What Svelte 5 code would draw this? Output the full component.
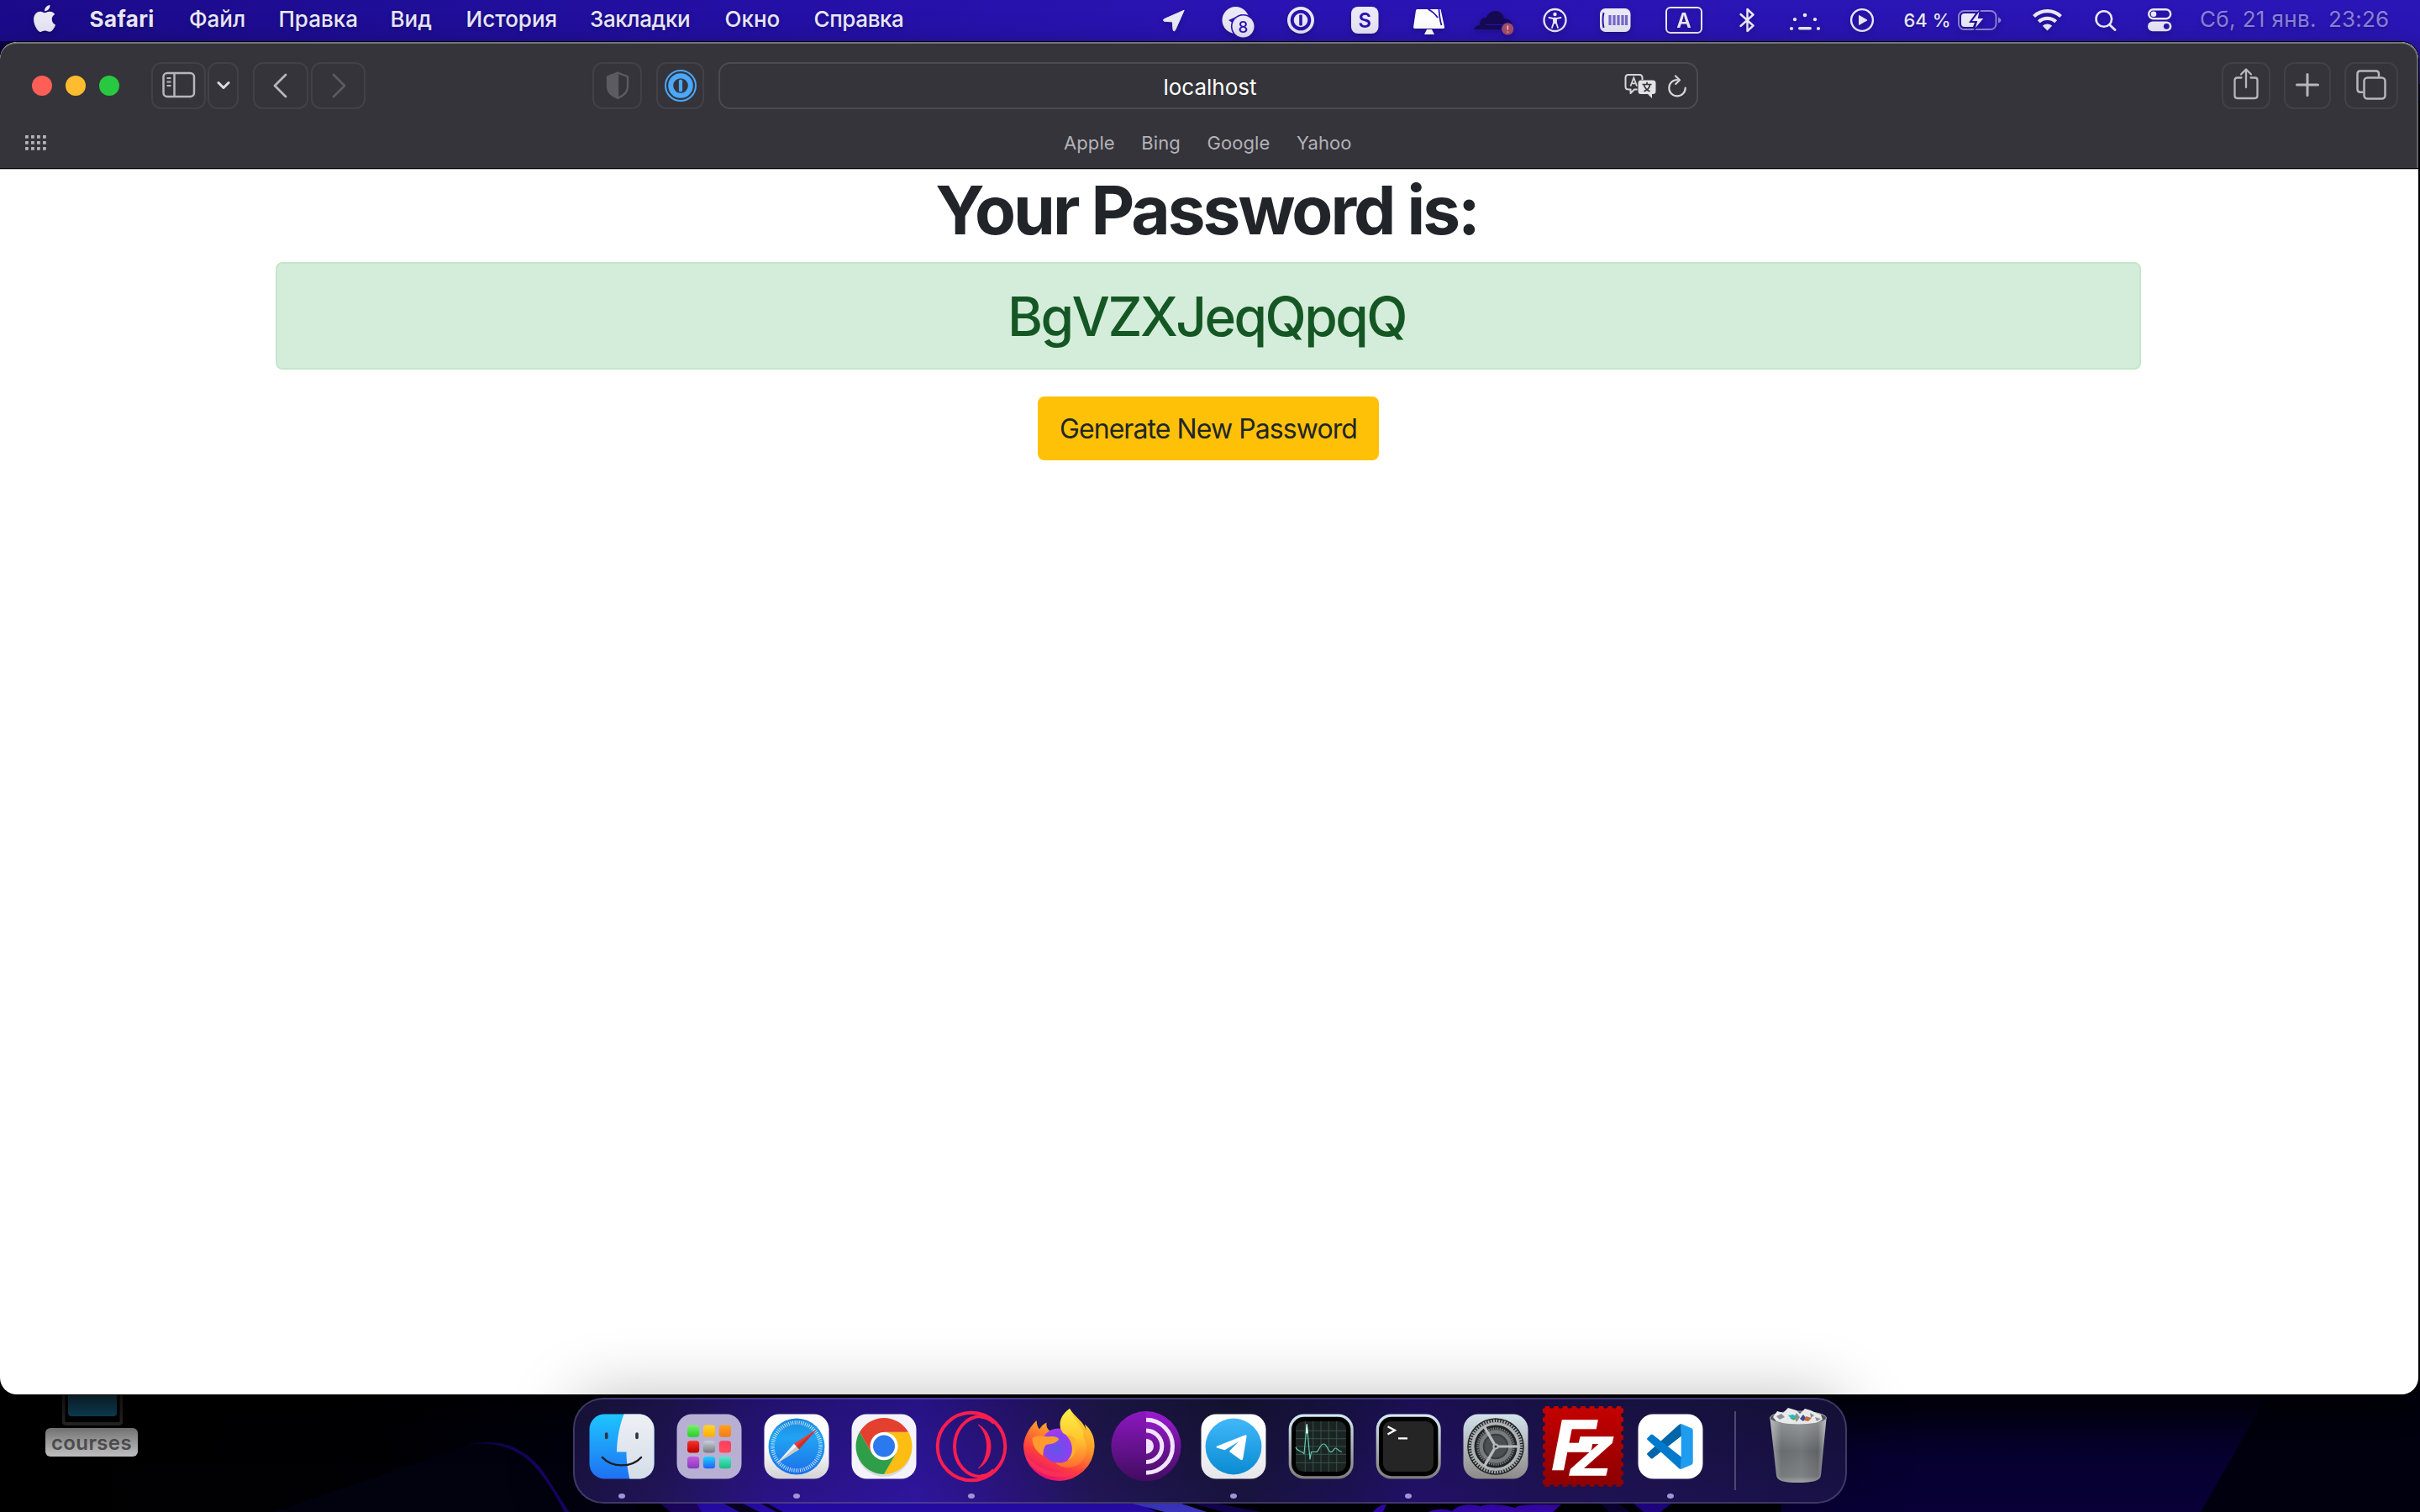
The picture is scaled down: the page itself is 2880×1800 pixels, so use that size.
<script>
  const bookmarks = ['Apple', 'Bing', 'Google', 'Yahoo'];

  const launchpad = [
    ['#7df06a', '#22cf2c'], ['#ffd32e', '#ffad00'], ['#ffa31a', '#f5791f'],
    ['#f5342a', '#c00000'], ['#c9d0d8', '#75797c'], ['#ff3b5f', '#ff4d5c'],
    ['#c35ae0', '#8739bd'], ['#1fd0ff', '#1f62f0'], ['#5be3d3', '#12bf7b']
  ].map(([from, to], i) => ({ from, to, x: 26 + (i % 3) * 18.9, y: 26.5 + Math.floor(i / 3) * 18.8 }));

  const bites = Array.from({ length: 10 }, (_, i) => 4 + i * 10.67);
  const gridDots = Array.from({ length: 12 }, (_, i) => ({ x: (i % 4) * 7, y: Math.floor(i / 4) * 7 }));
</script>

<div class="desktop">
  <svg class="wallpaper" viewBox="0 0 2880 1800" width="2880" height="1800" aria-hidden="true">
    <defs>
      <linearGradient id="wp-left" x1="0" x2="1" y1="0" y2="0">
        <stop offset="0" stop-color="#000" /><stop offset=".6" stop-color="#010004" /><stop offset="1" stop-color="#020112" />
      </linearGradient>
      <linearGradient id="wp-right" x1="0" x2="0" y1="0" y2="1">
        <stop offset="0" stop-color="#020010" /><stop offset=".6" stop-color="#070030" /><stop offset="1" stop-color="#080036" />
      </linearGradient>
      <linearGradient id="wp-arc" gradientUnits="userSpaceOnUse" x1="556" y1="0" x2="676" y2="0">
        <stop offset="0" stop-color="#070220" /><stop offset=".35" stop-color="#150458" /><stop offset="1" stop-color="#190468" />
      </linearGradient>
    </defs>
    <rect width="2880" height="1800" fill="#010008" />
    <rect y="40" width="2880" height="80" fill="#0b0545" />
    <rect x="1440" y="40" width="1440" height="60" fill="#2a16a8" />
    <rect y="1640" width="760" height="160" fill="url(#wp-left)" />
    <path d="M325 1800L556 1720C594 1710 625 1722 647 1753C660 1773 668 1786 674 1800Z" fill="#02010e" />
    <path d="M556 1720C592 1711 625 1722 647 1753C660 1773 668 1786 677 1800L672 1800C664 1785 656 1770 644 1755C624 1727 594 1714 556 1720Z" fill="url(#wp-arc)" stroke="url(#wp-arc)" stroke-width=".5" />
    <rect x="2120" y="1640" width="600" height="160" fill="url(#wp-right)" />
    <path d="M2702 1655L2880 1655V1800H2619Z" fill="#01000f" />
    <path d="M780 1785H832L838 1800H798Z" fill="#1e0566" />
    <path d="M828 1788H1352L1376 1800H835Z" fill="#2b0cb6" />
    <path d="M858 1788H880L904 1800H880Z M902 1788H910L932 1800H924Z" fill="#0b0226" />
    <path d="M1340 1788H1400L1436 1800H1386Z" fill="#403ad2" />
    <path d="M1420 1790H1450L1500 1800H1456Z" fill="#130455" />
    <path d="M1634 1800C1640 1792 1646 1791 1650 1791L1646 1800Z" fill="#3606b4" />
    <path d="M1700 1800C1708 1796 1720 1796 1728 1799C1736 1790 1752 1790 1762 1793C1775 1789 1790 1792 1803 1795C1812 1789 1840 1792 1858 1791L1848 1800Z" fill="#3a06b8" />
    <path d="M1944 1790H1989L1976 1800H1956Z" fill="#22058c" />
    <path d="M1905 1790H1926L1940 1800H1915Z" fill="#0c0235" />
  </svg>

  <div class="folder">
    <svg width="72" height="70" viewBox="0 0 72 70" aria-hidden="true">
      <defs>
        <linearGradient id="screen" x1="0" x2="0" y1="0" y2="1"><stop offset=".5" stop-color="#1a4a5e" /><stop offset="1" stop-color="#12587a" /></linearGradient>
      </defs>
      <rect x="1.500" y="-10" width="69" height="76" rx="3" fill="#000" stroke="#2d2d2d" stroke-width="4" />
      <rect x="7" y="-10" width="58" height="67" rx="4" fill="url(#screen)" />
    </svg>
    <span class="folder-name">courses</span>
  </div>

  <header class="menubar">
    <svg width="34" height="48" viewBox="0 0 34 48">
      <path transform="translate(-2.9 6) scale(1.33)" d="M12.152 6.896c-.948 0-2.415-1.078-3.96-1.04-2.04.027-3.91 1.183-4.961 3.014-2.117 3.675-.546 9.103 1.519 12.09 1.013 1.454 2.208 3.09 3.792 3.039 1.52-.065 2.09-.987 3.935-.987 1.831 0 2.35.987 3.96.948 1.637-.026 2.676-1.48 3.676-2.948 1.156-1.688 1.636-3.325 1.662-3.415-.039-.013-3.182-1.221-3.22-4.857-.026-3.04 2.48-4.494 2.597-4.559-1.429-2.09-3.623-2.324-4.39-2.376-2-.156-3.675 1.09-4.61 1.09zM15.53 3.83c.843-1.012 1.4-2.427 1.245-3.83-1.207.052-2.662.805-3.532 1.818-.78.896-1.454 2.338-1.273 3.714 1.338.104 2.715-.688 3.559-1.701" fill="#ebe8f8" />
    </svg>
    <b>Safari</b>
    <span>Файл</span>
    <span>Правка</span>
    <span>Вид</span>
    <span>История</span>
    <span class="tight">Закладки</span>
    <span>Окно</span>
    <span class="tight">Справка</span>

    <svg width="30" height="48" viewBox="0 0 30 48"><path d="M25.2 12.2L1.6 22.6C-.2 23.6 .4 25.2 2 25.3L11.3 26L12 35.4C12.2 37.2 13.9 37.4 14.7 35.8Z" fill="#ebe8f8" stroke="#ebe8f8" stroke-linejoin="round" /></svg>
    <svg width="44" height="48" viewBox="0 0 44 48">
      <circle cx="16.500" cy="24" r="16" fill="#ebe8f8" />
      <path d="M8 24L24 17L20 34L14 28Z" fill="#2914ae" />
      <circle cx="25.500" cy="31.500" r="14.600" fill="#2914ae" />
      <circle cx="25.500" cy="31.500" r="13" fill="#ebe8f8" />
      <text x="25.500" y="38.600" text-anchor="middle" font-size="19" font-weight="500" fill="#2914ae">8</text>
    </svg>
    <svg width="34" height="48" viewBox="0 0 34 48">
      <circle cx="16" cy="24" r="16" fill="#ebe8f8" /><circle cx="16" cy="24" r="10.300" fill="none" stroke="#2914ae" stroke-width="4" />
      <rect x="14.200" y="17.500" width="3.600" height="13" rx="1" fill="#2914ae" />
    </svg>
    <svg width="34" height="48" viewBox="0 0 34 48"><rect y="8" width="32.500" height="32" rx="8" fill="#ebe8f8" /><text x="16.200" y="32.600" text-anchor="middle" font-size="24" font-weight="600" fill="#2914ae">S</text></svg>
    <svg width="40" height="48" viewBox="0 0 40 48">
      <path d="M4.500 11H32.500L37 32Q37.200 34 35.500 34H1.500Q-.200 34 .100 32L3 12.500Q3.200 11 4.500 11Z M16 35H22L25 41H13Z" fill="#fff" />
      <path d="M17.500 11Q24 14 29 21M30.500 11Q31 22 33.500 30" fill="none" stroke="#2914ae" stroke-width="1.800" />
    </svg>
    <svg width="50" height="48" viewBox="0 0 50 48">
      <path d="M0 35Q2 30 7 30Q7 20 15 21Q18 13 25.500 13Q34 13 36 22Q46 22 47 35Z" fill="#160a55" />
      <path d="M14 29.500H34" stroke="#2914ae" />
      <circle cx="40.300" cy="34.500" r="8" fill="#2914ae" /><circle cx="40.300" cy="34.500" r="7" fill="#a84f66" />
      <path d="M40.300 30.500V35.500M40.300 37.500V38.800" stroke="#e6b9cc" stroke-width="1.800" />
    </svg>
    <svg width="32" height="48" viewBox="0 0 32 48" fill="none" stroke="#ebe8f8" stroke-linecap="round">
      <circle cx="14.500" cy="24" r="13" stroke-width="2.300" />
      <circle cx="14.500" cy="17" r="2.200" fill="#ebe8f8" stroke="none" />
      <path d="M7.500 21L12.500 22H16.500L21.500 21" stroke-width="1.800" /><path d="M13 22V27L11 33M16 22V27L18 33" stroke-width="1.800" /><path d="M14.500 22V27" stroke-width="3" />
    </svg>
    <svg width="38" height="48" viewBox="0 0 38 48">
      <rect y="10" width="36.500" height="28" rx="6.500" fill="#ebe8f8" />
      <path d="M4.500 15Q2.500 24 4.500 33" fill="none" stroke="#2914ae" stroke-width="2" />
      <path d="M12 18V30M17 18V30M22 18V30M27 18V30M31.500 18V30" stroke="#7469c8" stroke-width="3.200" />
    </svg>
    <svg width="46" height="48" viewBox="0 0 46 48"><rect x="1" y="9" width="42" height="30" rx="5" fill="none" stroke="#ebe8f8" stroke-width="2" /><text x="22" y="32.500" text-anchor="middle" font-size="24" font-weight="600" fill="#ebe8f8">A</text></svg>
    <svg width="20" height="48" viewBox="0 0 20 48"><path d="M1.500 17L16.500 30.500L9.500 37V11L16.500 17.500L1.500 31" fill="none" stroke="#ebe8f8" stroke-width="2.400" stroke-linejoin="round" stroke-linecap="round" /></svg>
    <svg width="38" height="48" viewBox="0 0 38 48" fill="#ebe8f8"><circle cx="18" cy="18" r="2.300" /><circle cx="6" cy="23.200" r="2.100" /><circle cx="30" cy="23.200" r="2.100" /><circle cx="2" cy="34" r="2.100" /><circle cx="34" cy="34" r="2.100" /><rect x="10" y="32" width="16" height="3.600" rx="1.800" /></svg>
    <svg width="30" height="48" viewBox="0 0 30 48"><circle cx="14" cy="24" r="12.900" fill="none" stroke="#ebe8f8" stroke-width="2.400" /><path d="M10.500 18.500L20 24L10.500 29.500Z" fill="#ebe8f8" stroke="#ebe8f8" stroke-linejoin="round" /></svg>
    <span class="percent">64 %</span>
    <svg width="54" height="48" viewBox="0 0 54 48">
      <rect x="1" y="13" width="44.500" height="22" rx="6.500" fill="none" stroke="#8a80d6" stroke-width="2" />
      <path d="M48 20.500Q51.500 22 51.500 24T48 27.500Z" fill="#8a80d6" />
      <path d="M8 16H21L13 27H20L18 32H8Q4 32 4 28V20Q4 16 8 16Z" fill="#ebe8f8" />
      <path d="M26.500 11.500L16 25.500H22.500L19.500 36L31.500 21.500H24.500Z" fill="#ebe8f8" stroke="#2914ae" stroke-width="1.200" />
    </svg>
    <svg width="36" height="48" viewBox="0 0 36 48" fill="none" stroke="#ebe8f8" stroke-width="4.200">
      <path d="M1.500 19.500A23.500 23.500 0 0 1 33.500 19.500M7.300 25.800A15 15 0 0 1 27.700 25.800" />
      <path d="M17.500 36.500L11.800 30.700A8.500 8.500 0 0 1 23.200 30.700Z" fill="#ebe8f8" stroke="none" />
    </svg>
    <svg width="28" height="48" viewBox="0 0 28 48" fill="none" stroke="#ebe8f8" stroke-width="2.600" stroke-linecap="round"><circle cx="10.800" cy="22.500" r="9.300" /><path d="M17.600 29.500L24 35.500" stroke-width="3" /></svg>
    <svg width="30" height="48" viewBox="0 0 30 48">
      <rect x="1.200" y="11.200" width="26" height="11" rx="5.500" fill="none" stroke="#ebe8f8" stroke-width="2.400" /><circle cx="7" cy="16.700" r="3.300" fill="#ebe8f8" />
      <rect y="25.500" width="28.400" height="11.700" rx="5.800" fill="#ebe8f8" /><circle cx="22.300" cy="31.300" r="3.400" fill="#2914ae" />
    </svg>
    <span class="date">Сб, 21 янв.</span>
    <span class="time">23:26</span>
  </header>

  <section class="window">
    <div class="toolbar">
      <div class="controls">
        <div class="lights"><i class="close"></i><i class="minimize"></i><i class="zoom"></i></div>
        <button class="tool sidebar" aria-label="Sidebar">
          <svg width="40" height="34" viewBox="0 0 40 34" fill="none" stroke="#b7b6bb" stroke-width="2.500"><rect x="1.500" y="2" width="36.500" height="28" rx="4.500" /><path d="M14.500 2V30" /><path d="M5.500 8H10.500M5.500 12.500H10.500M5.500 17H10.500" stroke-width="1.800" /></svg>
        </button>
        <button class="tool chevron" aria-label="Tab groups">
          <svg width="16" height="12" viewBox="0 0 16 12"><path d="M2 2.500L8 8.500L14 2.500" fill="none" stroke="#dcdce0" stroke-width="3" stroke-linecap="round" stroke-linejoin="round" /></svg>
        </button>
        <button class="tool back" aria-label="Back">
          <svg width="20" height="30" viewBox="0 0 20 30"><path d="M16 2L3 15L16 28" fill="none" stroke="#b7b6bb" stroke-width="2.800" stroke-linecap="round" stroke-linejoin="round" /></svg>
        </button>
        <button class="tool forward" aria-label="Forward">
          <svg width="20" height="30" viewBox="0 0 20 30"><path d="M4 2L17 15L4 28" fill="none" stroke="#5b5a60" stroke-width="2.800" stroke-linecap="round" stroke-linejoin="round" /></svg>
        </button>
        <button class="tool shield" aria-label="Privacy report">
          <svg width="30" height="36" viewBox="0 0 30 36"><path d="M15 2.500L26.500 7Q27 7.300 27 8V19Q27 28 15 33Z" fill="none" stroke="#5c5b61" stroke-width="2.400" stroke-linejoin="round" /><path d="M15 1.500L3 6Q1.800 6.500 1.800 8V19Q2 29 15 34Z" fill="#5c5b61" /></svg>
        </button>
        <button class="tool onepassword" aria-label="1Password">
          <svg width="40" height="40" viewBox="0 0 40 40"><circle cx="20" cy="20" r="18" fill="none" stroke="#4aa8ff" stroke-width="2" /><circle cx="20" cy="20" r="11.800" fill="none" stroke="#4aa8ff" stroke-width="6" /><rect x="17.900" y="12.800" width="4.200" height="14.400" rx="1.500" fill="#4aa8ff" /></svg>
        </button>
        <div class="url">
          <span class="host">localhost</span>
          <div class="url-icons">
            <svg width="40" height="32" viewBox="0 0 40 32">
              <path d="M5 2H18Q21.500 2 21.500 5.500V8M15.500 19.500H12L7.500 24V19.500H5Q1.500 19.500 1.500 16V5.500Q1.500 2 5 2" fill="none" stroke="#d6d6d8" stroke-width="2" stroke-linejoin="round" />
              <path d="M7.500 15.500L11.300 5.500L15 15.500M8.700 12.300H14" fill="none" stroke="#d6d6d8" stroke-width="1.800" />
              <path d="M20 8.500H34Q37.500 8.500 37.500 12V21.500Q37.500 25 34 25H33V30L28 25H20Q16.500 25 16.500 21.500V12Q16.500 8.500 20 8.500Z" fill="#e3e3e5" />
              <path d="M21.500 13.500H32.500M27 10.800V13.500M23.500 21.800Q30 19 30.500 13.800M30.500 21.800Q24.500 19 23.500 13.800" fill="none" stroke="#35343a" stroke-width="1.700" />
            </svg>
            <svg width="24" height="30" viewBox="0 0 24 30" fill="none" stroke="#d6d6d8" stroke-width="2.200" stroke-linecap="round" stroke-linejoin="round"><path d="M12 7A9.700 9.700 0 1 0 21.700 16.700" /><path d="M10 2.500L15 7.300L10.200 12" /></svg>
          </div>
        </div>
        <button class="tool share" aria-label="Share">
          <svg width="32" height="40" viewBox="0 0 32 40" fill="none" stroke="#b7b6bb" stroke-width="2.300" stroke-linecap="round" stroke-linejoin="round"><path d="M10.500 12.500H5.500Q2.500 12.500 2.500 15.500V33.500Q2.500 37 5.500 37H26.500Q29.500 37 29.500 33.500V15.500Q29.500 12.500 26.500 12.500H21.500" /><path d="M16 24V3M10 8.500L16 2.500L22 8.500" /></svg>
        </button>
        <button class="tool plus" aria-label="New tab">
          <svg width="28" height="28" viewBox="0 0 28 28"><path d="M14 1.500V26.500M1.500 14H26.500" stroke="#b7b6bb" stroke-width="3" stroke-linecap="round" /></svg>
        </button>
        <button class="tool tabs" aria-label="Tab overview">
          <svg width="36" height="36" viewBox="0 0 36 36" fill="none" stroke="#b7b6bb" stroke-width="2.500"><path d="M8.500 26.700H5Q1.500 26.700 1.500 23V5Q1.500 1.500 5 1.500H23.500Q27 1.500 27 5V8.500" /><rect x="9.500" y="9.500" width="25" height="25" rx="4" /></svg>
        </button>
      </div>
      <div class="favorites">
        <svg width="26" height="20" viewBox="0 0 26 20" fill="#b5b4b9">{#each gridDots as d}<rect x={d.x} y={d.y} width="3.800" height="3.800" rx=".5" />{/each}</svg>
        <nav>{#each bookmarks as name}<a href="#top">{name}</a>{/each}</nav>
      </div>
    </div>

    <div class="page">
      <h1>Your Password is:</h1>
      <div class="alert"><h2>BgVZXJeqQpqQ</h2></div>
      <button class="generate">Generate New Password</button>
    </div>
  </section>

  <footer class="dock">
    <!-- Finder -->
    <div class="slot running">
      <svg viewBox="0 0 104 104">
        <defs>
          <linearGradient id="fi-b" x1="0" x2="0" y1="0" y2="1"><stop offset=".1" stop-color="#1dc9ff" /><stop offset=".9" stop-color="#1f6df2" /></linearGradient>
          <linearGradient id="fi-w" x1="0" x2="0" y1="0" y2="1"><stop offset="0" stop-color="#f3f3f6" /><stop offset="1" stop-color="#d3dde8" /></linearGradient>
          <clipPath id="squircle"><rect x="13.500" y="13.500" width="77" height="77" rx="18" /></clipPath>
        </defs>
        <g clip-path="url(#squircle)">
          <rect width="104" height="104" fill="url(#fi-b)" />
          <path d="M56 10C50 24 46.500 40 46 58.500H57.500C57.500 70 59 80 62 94H104V0Z" fill="url(#fi-w)" />
        </g>
        <path d="M33.700 37V41.500M70 37V41.500" stroke="#2d3340" stroke-width="3.600" stroke-linecap="round" />
        <path d="M29 65C40 77.500 64 77.500 75 65" fill="none" stroke="#1c1c22" stroke-width="2.400" stroke-linecap="round" />
      </svg>
    </div>
    <!-- Launchpad -->
    <div class="slot">
      <svg viewBox="0 0 104 104">
        <defs>{#each launchpad as t, i}<linearGradient id="lp{i}" x1="0" x2="0" y1="0" y2="1"><stop offset="0" stop-color={t.from} /><stop offset="1" stop-color={t.to} /></linearGradient>{/each}</defs>
        <rect x="13.500" y="13.500" width="77" height="77" rx="18" fill="#b8b0d3" />
        {#each launchpad as t, i}<rect x={t.x} y={t.y} width="14.200" height="14.200" rx="3.500" fill="url(#lp{i})" />{/each}
      </svg>
    </div>
    <!-- Safari -->
    <div class="slot running">
      <svg viewBox="0 0 104 104">
        <defs>
          <linearGradient id="sf-b" x1="0" x2="0" y1="0" y2="1"><stop offset=".5" stop-color="#fff" /><stop offset="1" stop-color="#d2d2d4" /></linearGradient>
          <linearGradient id="sf-d" x1="0" x2="0" y1="0" y2="1"><stop offset="0" stop-color="#1c8ade" /><stop offset=".35" stop-color="#21a3f3" /><stop offset="1" stop-color="#1c6fe8" /></linearGradient>
        </defs>
        <rect x="13.500" y="13.500" width="77" height="77" rx="18" fill="url(#sf-b)" />
        <circle cx="52" cy="52" r="33.500" fill="url(#sf-d)" />
        <circle cx="52" cy="52" r="28.500" fill="none" stroke="#d5ecff" stroke-width="4.500" stroke-dasharray=".9 1.587" />
        <path d="M76 31.500L54.800 55.500L49 48.800Z" fill="#ea3c34" />
        <path d="M28.500 72L49 48.800L54.800 55.500Z" fill="#f1f1f3" />
        <path d="M76 31.500L54.800 55.500L51.900 52Z" fill="#c92f2b" /><path d="M28.500 72L51.900 52L54.800 55.500Z" fill="#c9c9ce" />
      </svg>
    </div>
    <!-- Chrome -->
    <div class="slot">
      <svg viewBox="0 0 104 104">
        <rect x="13.500" y="13.500" width="77" height="77" rx="18" fill="#f4f2fa" />
        <ellipse cx="52" cy="55" rx="33" ry="33" fill="#000" opacity=".1" />
        <g transform="translate(52 51.600)">
          <path d="M0 -16.750L29 -16.750A33.500 33.500 0 0 1 0 33.500L14.500 8.375Z" fill="#fdbd12" />
          <path d="M14.500 8.375L0 33.500A33.500 33.500 0 0 1 -29 -16.750L-14.500 8.375Z" fill="#2f9e49" />
          <path d="M-14.500 8.375L-29 -16.750A33.500 33.500 0 0 1 29 -16.750H0Z" fill="#e4402f" />
          <circle r="16.600" fill="#fff" /><circle r="13" fill="#2a79ee" />
        </g>
      </svg>
    </div>
    <!-- Opera GX -->
    <div class="slot running">
      <svg viewBox="0 0 104 104" fill="none" stroke="#fa1e4e">
        <circle cx="52" cy="52" r="40.300" stroke-width="4" />
        <path d="M64 16C46 16 32 32 32 52S46 88 64 88" stroke-width="4" />
        <path d="M63 16.500Q72 16.500 79 24M63 87.500Q72 87.500 79 80" stroke-width="4.500" />
        <path d="M60 26C80 36 80 68 60 78C74 66 74 38 60 26Z" fill="#fa1e4e" stroke-width="1" />
      </svg>
    </div>
    <!-- Firefox -->
    <div class="slot">
      <svg viewBox="0 0 104 104">
        <defs>
          <linearGradient id="ff-o" x1=".75" x2=".25" y1="0" y2="1"><stop offset="0" stop-color="#ffe23a" /><stop offset=".38" stop-color="#ff9a28" /><stop offset=".7" stop-color="#ff3f3c" /><stop offset="1" stop-color="#e2087f" /></linearGradient>
          <radialGradient id="ff-p" cx=".45" cy=".6" r=".65"><stop offset="0" stop-color="#6156e8" /><stop offset=".6" stop-color="#8a40f0" /><stop offset="1" stop-color="#b637e0" /></radialGradient>
          <linearGradient id="ff-y" x1="0" x2="0" y1="0" y2="1"><stop offset="0" stop-color="#fff04a" /><stop offset=".5" stop-color="#ffc72e" /><stop offset="1" stop-color="#ff6a30" /></linearGradient>
        </defs>
        <path d="M65 7C72 18 82 22 85 34L83 25.500C92 33 95 43 94.500 53A42.300 42 0 0 1 10 53C10 42 15 32 25.500 21C26 26 27 29 29 31.500C31 28 34 25 37.500 23.500C37 28 38 31 41 33L54 34C53 22 58 13 65 7Z" fill="url(#ff-o)" />
        <circle cx="51.500" cy="51" r="20.500" fill="url(#ff-p)" />
        <path d="M65 7C54 14 50 26 57 36C64 40 70 45 70 55C69 68 60 74 48 71C58 82 79 78 84 62C87 52 84 46 81 40C84 30 69 20 65 7Z" fill="url(#ff-y)" />
        <path d="M61 39C66 38 70 40 72 44C74 56 70 66 62 69C70 62 70 47 61 39Z" fill="#ffb02c" />
        <path d="M20.500 42C27 37 36 41 43 40C48 40 52 41 52 44C49 48 43 49 37 50C33 54 34 60 33 63C25 58 20 50 20.500 42Z" fill="#ff9b2e" />
        <path d="M12 62C20 88 60 98 86 76C70 88 34 88 12 62Z" fill="#ff3552" opacity=".7" />
      </svg>
    </div>
    <!-- Tor Browser -->
    <div class="slot">
      <svg viewBox="0 0 104 104">
        <defs><linearGradient id="tor" x1="0" x2="0" y1="0" y2="1"><stop offset="0" stop-color="#9a1bd0" /><stop offset="1" stop-color="#430d60" /></linearGradient></defs>
        <circle cx="52" cy="51.700" r="41.600" fill="url(#tor)" />
        <path d="M52 10.500A41.200 41.200 0 0 0 52 93Z" fill="#3a0a66" opacity=".14" />
        <g fill="none" stroke="#f2e4ff" stroke-width="5"><path d="M52 20.200A31.500 31.500 0 0 1 52 83.200" /><path d="M52 32.900A18.800 18.800 0 0 1 52 70.500" /></g>
        <path d="M52 42.700A9 9 0 0 1 52 60.700Z" fill="#f2e4ff" />
      </svg>
    </div>
    <!-- Telegram -->
    <div class="slot running">
      <svg viewBox="0 0 104 104">
        <defs>
          <linearGradient id="tg" x1="0" x2="0" y1="0" y2="1"><stop offset="0" stop-color="#41b8fa" /><stop offset="1" stop-color="#0a8bd2" /></linearGradient>
          <linearGradient id="tile" x1="0" x2="0" y1="0" y2="1"><stop offset=".2" stop-color="#fff" /><stop offset="1" stop-color="#e6e6ea" /></linearGradient>
        </defs>
        <rect x="13.500" y="13.500" width="77" height="77" rx="18" fill="url(#tile)" />
        <circle cx="52" cy="52" r="33.400" fill="url(#tg)" />
        <path d="M32.500 51.500L65.500 38.400Q68 37.600 67.500 40.500L63.200 66.500Q62.600 69 60.400 67.700L47.500 58.500Q46.800 57.500 48 56.500L58 46.300L41.500 56.300L32 53.500Q30.500 52.500 32.500 51.500Z" fill="#fff" />
      </svg>
    </div>
    <!-- Activity Monitor -->
    <div class="slot">
      <svg viewBox="0 0 104 104">
        <defs><linearGradient id="frame" x1="0" x2="0" y1="0" y2="1"><stop offset="0" stop-color="#d4ebf5" /><stop offset="1" stop-color="#807b7a" /></linearGradient></defs>
        <rect x="13.700" y="13.500" width="77" height="77" rx="18" fill="url(#frame)" />
        <rect x="17" y="16.800" width="70.400" height="70.400" rx="15" fill="#000" />
        <rect x="22" y="22" width="60" height="60" rx="9" fill="#1c2422" />
        <path d="M33.300 22V82M42.700 22V82M52 22V82M61.300 22V82M70.700 22V82M22 33.300H82M22 42.700H82M22 52H82M22 61.300H82M22 71.300H82" stroke="#36584f" stroke-width=".9" />
        <path d="M22 53C24 58 28 57 32 60.500L35.300 25.500L39 67.500L40.500 58.500L47 58.500C51 55 51 49 55.300 49S60 58 63.500 58.500S67 54 69.500 54S73 58.500 77 58.500" fill="none" stroke="#62c9b4" stroke-width="1.200" />
        <path d="M34.300 36L35.300 25.500L36.300 36Z" fill="#d7fff5" stroke="#d7fff5" />
      </svg>
    </div>
    <!-- Terminal -->
    <div class="slot running">
      <svg viewBox="0 0 104 104">
        <rect x="13.700" y="13.500" width="77" height="77" rx="18" fill="url(#frame)" />
        <rect x="17" y="16.800" width="70.400" height="70.400" rx="15" fill="#000" />
        <rect x="22" y="22" width="60" height="60" rx="9" fill="#252525" />
        <path d="M27.500 28.200L36 32.800L27.500 37.500M40 42.300H51" fill="none" stroke="#fff" stroke-width="2.300" />
      </svg>
    </div>
    <!-- System Preferences -->
    <div class="slot">
      <svg viewBox="0 0 104 104" fill="none">
        <defs><linearGradient id="set" x1="0" x2="0" y1="0" y2="1"><stop offset="0" stop-color="#d3e3ec" /><stop offset="1" stop-color="#8e8a88" /></linearGradient></defs>
        <rect x="13.500" y="13.500" width="77" height="77" rx="18" fill="url(#set)" />
        <circle cx="52" cy="52" r="33.800" fill="#222425" />
        <circle cx="52" cy="52" r="30.600" stroke="#a7acaf" stroke-width="3.400" stroke-dasharray="1.800 1.404" />
        <circle cx="52" cy="52" r="27.300" stroke="#b0b4b6" stroke-width="3.600" />
        <circle cx="52" cy="52" r="21.500" fill="#3a3d3f" stroke="#797d7f" stroke-width="2.500" stroke-dasharray="1.400 1.300" />
        <circle cx="52" cy="52" r="17.500" stroke="#777b7d" stroke-width="4.500" />
        <circle cx="52" cy="52" r="13" fill="#4c4f51" />
        <path d="M52 52H79M52 52L38.500 28.600M52 52L38.500 75.400" stroke="#b9bdbf" stroke-width="3.200" />
        <circle cx="52" cy="52" r="3.600" fill="#b4b8ba" /><circle cx="52" cy="52" r="1.500" fill="#333" />
      </svg>
    </div>
    <!-- FileZilla -->
    <div class="slot">
      <svg viewBox="0 0 104 104">
        <defs>
          <linearGradient id="fz" x1="0" x2="0" y1="0" y2="1"><stop offset="0" stop-color="#c60000" /><stop offset="1" stop-color="#8a0000" /></linearGradient>
          <mask id="stamp"><rect width="104" height="104" fill="#fff" />{#each bites as b}<circle cx={b} cy="4" r="2.800" /><circle cx={b} cy="100" r="2.800" /><circle cx="4" cy={b} r="2.800" /><circle cx="100" cy={b} r="2.800" />{/each}</mask>
        </defs>
        <rect x="4" y="4" width="96" height="96" fill="url(#fz)" mask="url(#stamp)" />
        <text class="fz" x="14.500" y="80" font-size="86">F<tspan x="38" y="86" font-size="65" textLength="47" lengthAdjust="spacingAndGlyphs">Z</tspan></text>
      </svg>
    </div>
    <!-- Visual Studio Code -->
    <div class="slot running">
      <svg viewBox="0 0 104 104">
        <rect x="13.500" y="13.500" width="77" height="77" rx="18" fill="#fff" />
        <path d="M64.700 25Q62.500 25 60.500 27.500L24.500 60Q23.500 61 24.500 62L28.500 66Q29.700 67 31 66L65 39.500Z" fill="#0065a9" />
        <path d="M64.700 79Q62.500 79 60.500 76.500L24.500 44Q23.500 43 24.500 42L28.500 38Q29.700 37 31 38L65 64.500Z" fill="#007acc" />
        <path d="M64.700 25L77 30.300Q78.700 31 78.700 33V71Q78.700 73 77 73.700L64.700 79Z" fill="#1f9cf0" />
      </svg>
    </div>
    <div class="divider"></div>
    <!-- Trash -->
    <div class="slot">
      <svg viewBox="0 0 104 104">
        <defs>
          <linearGradient id="tr" x1="0" x2="1" y1="0" y2="0"><stop offset="0" stop-color="#a0a3a6" /><stop offset=".2" stop-color="#686c6f" /><stop offset=".55" stop-color="#717577" /><stop offset=".85" stop-color="#606366" /><stop offset="1" stop-color="#a5a8aa" /></linearGradient>
          <linearGradient id="tr2" x1="0" x2="0" y1="0" y2="1"><stop offset="0" stop-color="#fff" stop-opacity=".28" /><stop offset=".5" stop-color="#fff" stop-opacity="0" /><stop offset=".9" stop-color="#fff" stop-opacity=".1" /><stop offset="1" stop-color="#fff" stop-opacity=".35" /></linearGradient>
        </defs>
        <ellipse cx="52" cy="18" rx="33.500" ry="8" fill="#55585b" stroke="#a9adb0" stroke-width="1" />
        <path d="M22 17L27 10L34 12L40 6L50 9L54 13L60 7L67 9L73 12L79 14L81 20L74 24L60 26H40L26 22Z" fill="#e8e9ea" />
        <path d="M26 16L32 13L36 17L30 20ZM66 12L71 15L67 18ZM50 12L54 17L50 23L47 17ZM72 17L79 19L74 22Z" fill="#8d9196" />
        <path d="M40 15L46 14L50 17L45 20Z" fill="#23b7c9" /><path d="M42 18L49 18L47 21Z" fill="#4cb04c" /><path d="M54 19L58 14L61 18L58 22Z" fill="#39488f" /><path d="M61 16L68 18L64 22L59 21Z" fill="#c4683a" />
        <path d="M18.500 19C26 27.500 78 27.500 85.500 19L79 86C78.500 90 76 92 70 93.500C58 95.500 44 95.500 34 93.500C29 92 26.500 90 26 86Z" fill="url(#tr)" />
        <path d="M18.500 19C26 27.500 78 27.500 85.500 19L79 86C78.500 90 76 92 70 93.500C58 95.500 44 95.500 34 93.500C29 92 26.500 90 26 86Z" fill="url(#tr2)" />
      </svg>
    </div>
  </footer>
</div>

<style>
  :global(body) { margin: 0; overflow: hidden; background: #000; }
  .desktop { position: relative; display: flex; flex-direction: column; width: 2880px; height: 1800px; overflow: hidden; font-family: Inter, 'Noto Sans', sans-serif; }
  .wallpaper { position: absolute; inset: 0; }
  svg { display: block; flex: none; }

  .folder { position: absolute; left: 54px; top: 1629px; display: flex; flex-direction: column; align-items: center; width: 110px; }
  .folder svg { margin-left: 2px; }
  .folder-name { margin-top: 1px; width: 110px; height: 34px; border-radius: 6px; background: linear-gradient(#8a8a8a, #c0c0c0); color: #505053; font-size: 24px; font-weight: 600; line-height: 35px; letter-spacing: .37px; text-align: center; }

  .menubar {
    position: relative; display: grid; height: 49px; box-sizing: border-box; padding-left: 40px; overflow: hidden; white-space: nowrap;
    grid-template-columns: 66.5px 118.5px 106.5px 133px 90px 147.5px 160.5px 106px 415.5px 70px 78px 76px 74px 72px 82px 68px 78px 88px 60px 72px 63.5px 64.5px 89px 74px 63px 62px 153px 1fr;
    background: linear-gradient(90deg, #1b0b8a 0, #1f0e98 500px, #2410a6 950px, #2914b2 1400px, #2a16b7 2880px);
    color: #ebe8f8; font-size: 26px; font-weight: 500; line-height: 46px;
  }
  .menubar svg { filter: drop-shadow(0 2px 3px rgba(0, 0, 0, .25)); overflow: visible; }
  .menubar span, .menubar b { text-shadow: 0 2px 4px rgba(0, 0, 0, .25); }
  .menubar b { font-weight: 700; letter-spacing: .4px; }
  .menubar .tight { letter-spacing: -.38px; }
  .menubar .percent { font-size: 22px; line-height: 48px; }
  .menubar .date, .menubar .time { color: #8c82d8; font-weight: 400; letter-spacing: .36px; }
  .menubar .time { letter-spacing: .18px; }

  .window { position: relative; margin-top: 1px; width: 2878px; height: 1610px; border-radius: 20px; overflow: hidden; box-shadow: 0 0 0 1px #000, 0 24px 50px rgba(0, 0, 0, .75); display: flex; flex-direction: column; background: #fff; }
  .toolbar { height: 150px; box-sizing: border-box; background: #35343a; border-top: 2px solid #747377; border-right: 2px solid #626166; border-radius: 20px 20px 0 0; padding-top: 22px; }
  .controls { display: flex; align-items: center; height: 56px; padding-left: 38px; }
  .lights { display: flex; gap: 16px; margin-right: 38px; }
  .lights i { width: 24px; height: 24px; border-radius: 50%; }
  .close { background: #ff5f57; }
  .minimize { background: #febc2e; }
  .zoom { background: #28c840; }
  .tool { display: flex; align-items: center; justify-content: center; flex: none; height: 56px; padding: 0; box-sizing: border-box; border: 2px solid #424147; border-radius: 12px; background: none; }
  .sidebar { width: 65px; }
  .chevron { width: 37px; margin-left: 2px; }
  .back { width: 66px; margin-left: 17px; }
  .forward { width: 65px; margin-left: 3px; }
  .shield { width: 59px; margin-left: 270px; }
  .onepassword { width: 57px; margin-left: 17px; }
  .url { display: grid; grid-template-columns: 1fr auto 1fr; align-items: center; width: 1166px; height: 56px; box-sizing: border-box; margin-left: 17px; padding: 0 11px 0 15px; border: 2px solid #4b4a50; border-radius: 14px; color: #fff; }
  .host { grid-column: 2; font-size: 26px; line-height: 52px; padding-top: 2px; }
  .url-icons { display: flex; align-items: center; justify-content: flex-end; gap: 11px; }
  .share { width: 58px; margin-left: 623px; }
  .share svg { margin-top: -5px; }
  .plus { width: 56px; margin-left: 16px; }
  .plus svg { margin-top: -3px; }
  .tabs { width: 64px; margin-left: 16px; }
  .tabs svg { margin-top: -3px; }

  .favorites { display: flex; align-items: center; height: 70px; padding-left: 30px; }
  .favorites svg { margin-top: 11px; }
  .favorites nav { display: flex; gap: 31.5px; margin-left: 1210px; padding-top: 10px; }
  .favorites a { color: #b3b2b7; font-size: 22px; line-height: 40px; letter-spacing: .1px; text-decoration: none; }

  .page { flex: 1; display: flex; flex-direction: column; align-items: center; box-shadow: inset 0 1px #000, inset 0 2px #b9b9b9; padding-right: 2px; }
  h1 { margin: 0 0 12px; padding-right: 4px; color: #212529; font-size: 80px; font-weight: 700; line-height: 100px; letter-spacing: -2.98px; }
  .alert { width: 2220px; height: 128px; box-sizing: border-box; margin-bottom: 32px; border: 2px solid #c3e6cb; border-radius: 8px; background: #d4edda; text-align: center; }
  h2 { margin: 0; padding-right: 4px; color: #155724; font-size: 64px; font-weight: 500; line-height: 126px; letter-spacing: -2.53px; }
  .generate { width: 406px; height: 76px; padding: 2px 0 0; border: 0; border-radius: 8px; background: #ffc107; color: #212529; font: 400 32px/74px Inter, sans-serif; letter-spacing: -.92px; }

  .dock {
    position: relative; display: flex; align-self: center; width: 1516px; height: 126px; margin-top: 4px; box-sizing: border-box; padding: 4px; border: 2px solid rgba(150, 140, 190, .32); border-radius: 36px;
    background: linear-gradient(rgba(10, 6, 40, .18), rgba(60, 10, 200, .1)), linear-gradient(90deg, #171336 0, #1e154c 7%, #28147d 15%, #2d1698 27%, #281474 34%, #1e1748 41%, #15142f 52%, #191246 61%, #1f115c 66%, #1b1348 76%, #1a1344 85%, #151238 100%);
    box-shadow: 0 0 80px rgba(0, 0, 0, .27);
  }
  .slot { display: flex; flex-direction: column; align-items: center; flex: none; width: 104px; }
  .slot svg { width: 104px; height: 104px; }
  .running::after { content: ''; width: 8px; height: 8px; margin-top: 4px; border-radius: 50%; background: #a095d6; }
  .divider { width: 2px; height: 94px; margin: 10px 22px 0 24px; flex: none; background: #4b4870; }
  .fz { fill: #fff; stroke: #fff; stroke-width: 1.5; font-family: 'Liberation Sans', sans-serif; font-weight: 700; font-style: italic; }
</style>
